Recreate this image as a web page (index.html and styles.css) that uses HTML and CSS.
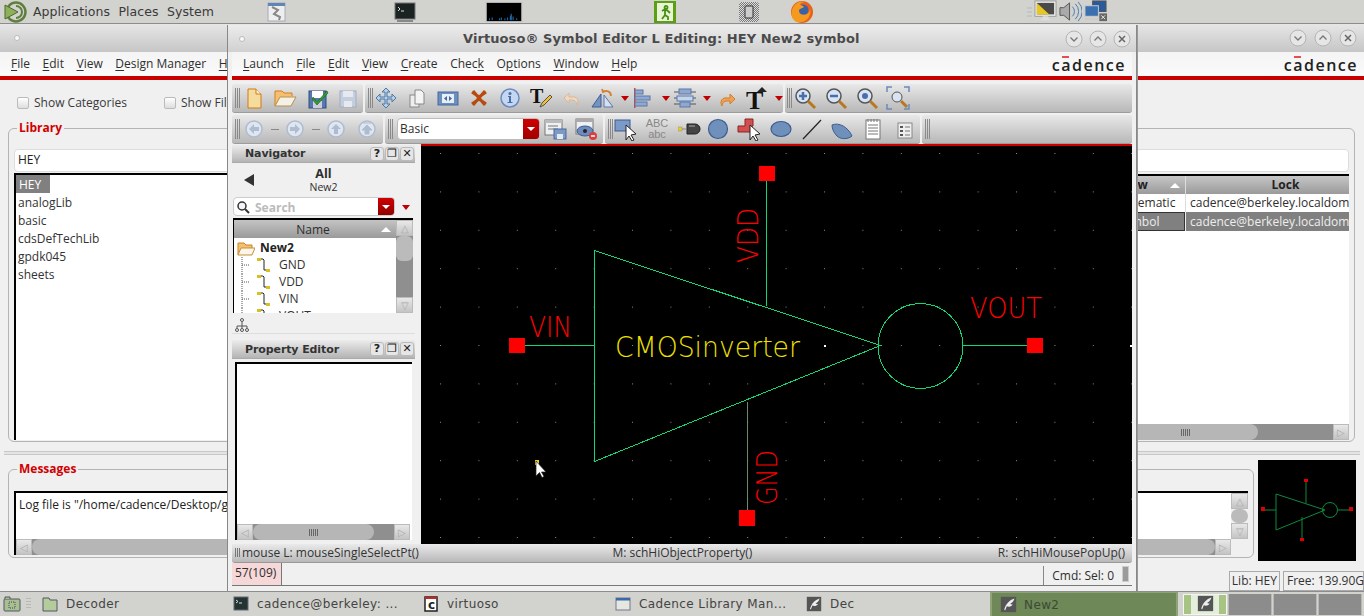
FILE: index.html
```html
<!DOCTYPE html>
<html lang="en">
<head>
<meta charset="utf-8">
<title>Virtuoso Symbol Editor</title>
<link rel="stylesheet" href="styles.css">
</head>
<body>
<svg class="sprite" width="0" height="0">
  <symbol id="pin" viewBox="0 0 16 16"><path d="M2 1h5l1 1v10h5" fill="none" stroke="#222" stroke-width="1"/><rect x="1" y="0" width="4" height="3" fill="#d8c020"/><rect x="10" y="11" width="4" height="3" fill="#d8c020"/></symbol>
  <symbol id="wbtn" viewBox="0 0 18 18"><circle cx="9" cy="9" r="8" fill="#e6e6e6" stroke="#b4b4b4"/></symbol>
  <symbol id="caret" viewBox="0 0 10 10"><path d="M1 3h8l-4 5z" fill="#c00000"/></symbol>
  <symbol id="grip3" viewBox="0 0 6 26"><path d="M.5 3v20M2.500 3v20M4.500 3v20" stroke="#8a8a8a" stroke-width="1"/></symbol>
  <symbol id="vnc" viewBox="0 0 20 20"><rect x="1" y="1" width="18" height="18" fill="#555"/><path d="M5 16C7 9 11 5 17 3c-1 4-3 5-5 6 1 1 2 1 3 1-2 3-5 3-7 2l-2 5z" fill="#eee"/></symbol>
</svg>

<div class="desktop">
  <header class="panel-top">
    <svg class="logo" viewBox="0 0 24 24"><circle cx="12" cy="12" r="9.500" fill="none" stroke="#5f7f3c" stroke-width="2.500"/><path d="M12 6a6 6 0 0 1 0 12" fill="none" stroke="#5f7f3c" stroke-width="2"/><path d="M1 5l13 7L1 19z" fill="#8fb05a" stroke="#4d6a2c"/></svg>
    <nav class="pmenu"><span>Applications</span><span>Places</span><span>System</span></nav>
    <svg class="tl tl1" viewBox="0 0 20 20"><rect x="1" y="1" width="17" height="18" fill="#eee" stroke="#aab"/><rect x="1" y="1" width="17" height="3" fill="#5d86b5"/><path d="M5 5l6 3-4 4 6 3-1 3" fill="none" stroke="#888" stroke-width="2"/></svg>
    <svg class="tl tl2" viewBox="0 0 22 20"><rect x="1" y="1" width="20" height="16" fill="#1a2222" stroke="#777"/><path d="M3 18h16v2H3z" fill="#888"/><path d="M4 5l2 2-2 2M7 9h3" stroke="#ddd" fill="none"/></svg>
    <svg class="tl tl3" viewBox="0 0 40 22"><rect x=".5" y=".5" width="39" height="21" fill="#000" stroke="#bbb" stroke-width="1"/><path d="M4 20v-2M7 20v-3M15 20v-2M17 20v-3M21 20v-2M24 20v-3M27 20v-5M28 20v-7M30 20v-4M34 20v-2" stroke="#2080d0"/></svg>
    <svg class="tl tl4" viewBox="0 0 22 22"><rect width="22" height="22" fill="#5aa010"/><rect x="3" y="2" width="16" height="18" fill="#e8f4d8"/><path d="M12 5a1.500 1.500 0 1 0 .1 0M8 10l3-2 3 2 2 2M11 9l0 5-3 4M11 14l3 2 0 3" stroke="#4a9010" stroke-width="1.800" fill="none"/></svg>
    <svg class="tl tl5" viewBox="0 0 20 20"><defs><pattern id="chk" width="2" height="2" patternUnits="userSpaceOnUse"><rect width="2" height="2" fill="#ddd"/><rect width="1" height="1" fill="#777"/><rect x="1" y="1" width="1" height="1" fill="#777"/></pattern></defs><rect width="20" height="20" rx="3" fill="url(#chk)"/><rect x="6" y="4" width="8" height="12" rx="1" fill="#ccc" stroke="#333"/></svg>
    <svg class="tl tl6" viewBox="0 0 24 24"><circle cx="12" cy="12" r="11" fill="#e8601a"/><circle cx="13" cy="10" r="5.500" fill="#3a62a8"/><path d="M2 10C4 3 10 0 16 2c-3 0-6 1-6 3 2 0 3 1 4 2-2 2-5 1-5 4 0 3 4 5 8 3 2-1 3-3 3-6 2 7-3 14-9 14C4 24 0 16 2 10z" fill="#f59a1e"/></svg>
    <svg class="grp" viewBox="0 0 6 12"><path d="M0 2h5M0 6h5M0 10h5" stroke="#b8b8b4"/></svg>
    <svg class="tray t1" viewBox="0 0 24 24"><rect x="1" y="1" width="22" height="16" fill="#eee" stroke="#999"/><rect x="3" y="3" width="18" height="12" fill="#4a4a48"/><path d="M3 3v12h13z" fill="#e8c820"/><path d="M9 17h6v2l3 2H6l3-2z" fill="#ddd"/></svg>
    <svg class="tray t2" viewBox="0 0 24 24"><path d="M1 8h4l6-5v18l-6-5H1z" fill="#aaa" stroke="#555"/><path d="M14 7a7 7 0 0 1 0 10M17 4a11 11 0 0 1 0 16M20 2a14 14 0 0 1 0 20" fill="none" stroke="#4a7ab0"/></svg>
    <svg class="tray t3" viewBox="0 0 24 24"><rect x="9" y="1" width="14" height="11" fill="#2a5a9a" stroke="#555"/><rect x="1" y="6" width="14" height="11" fill="#3a70b0" stroke="#ccc"/><path d="M1 19h14v2H1z" fill="#ccc"/><rect x="16" y="14" width="8" height="8" fill="#666"/><path d="M18 16l4 4m0-4l-4 4" stroke="#eee"/></svg>
  </header>

  <section class="win back">
    <div class="title"><i class="dot"></i><div class="wbtns back-b"><svg class="wb" viewBox="0 0 18 18"><use href="#wbtn"/><path d="M5.500 7.500l3.500 3.500 3.500-3.500" fill="none" stroke="#777" stroke-width="1.300"/></svg><svg class="wb" viewBox="0 0 18 18"><use href="#wbtn"/><path d="M5.500 10.500l3.500-3.500 3.500 3.500" fill="none" stroke="#777" stroke-width="1.300"/></svg><svg class="wb" viewBox="0 0 18 18"><use href="#wbtn"/><path d="M6 6l6 6m0-6l-6 6" fill="none" stroke="#666" stroke-width="1.500"/></svg></div></div>
    <div class="menubar back-m"><span><u>F</u>ile</span><span><u>E</u>dit</span><span><u>V</u>iew</span><span><u>D</u>esign Manager</span><span><u>H</u>elp</span><b class="cad">c<em>a</em>dence</b></div>
    <div class="opts"><label><i class="cb"></i>Show Categories</label><label><i class="cb"></i>Show Files</label></div>
    <fieldset class="grpbox lib">
      <legend>Library</legend>
      <div class="input">HEY</div>
      <div class="libbody">
        <ul class="liblist"><li class="sel">HEY</li><li>analogLib</li><li>basic</li><li>cdsDefTechLib</li><li>gpdk045</li><li>sheets</li></ul>
        <div class="cells">
          <div class="table">
            <div class="row head"><span class="c1">View<svg class="sort" viewBox="0 0 10 6"><path d="M0 6l5-5 5 5z" fill="#fff"/></svg></span><span class="c2">Lock</span></div>
            <div class="row"><span class="c1">schematic</span><span class="c2">cadence@berkeley.localdomain</span></div>
            <div class="row picked"><span class="c1 focus">symbol</span><span class="c2">cadence@berkeley.localdomain</span></div>
          </div>
          <div class="hscroll libscroll"><span class="thumb"><i></i></span><span class="arrow">▷</span></div>
        </div>
      </div>
    </fieldset>
    <div class="split"></div>
    <div class="msgrow">
      <fieldset class="grpbox msg">
        <legend>Messages</legend>
        <div class="logbox">
          <div class="logmain">
            <p>Log file is "/home/cadence/Desktop/gpdk045/CDS.log"</p>
            <div class="hscroll logscroll"><span class="arrow">◁</span><span class="thumb"></span><span class="arrow">▷</span></div>
          </div>
          <div class="vscroll logv"><span class="up">△</span><span class="vthumb"></span><span class="up">▽</span></div>
        </div>
      </fieldset>
      <svg class="preview" viewBox="0 0 98 101">
        <rect width="98" height="101" fill="#000"/>
        <g fill="none" stroke="#0c8a3c" stroke-width="1"><path d="M18 34V70L67 50zM72 50m-7.500 0a7.500 7.500 0 1 0 15 0a7.500 7.500 0 1 0-15 0M5 50H18M80 50H93M48 20V43M44 57V79"/></g>
        <g fill="#e00000"><rect x="3" y="47" width="4" height="4"/><rect x="91" y="47" width="4" height="4"/><rect x="46" y="19" width="4" height="3"/><rect x="42" y="78" width="4" height="3"/></g>
      </svg>
    </div>
    <div class="backstatus"><span>Lib: HEY</span><span>Free: 139.90G</span></div>
  </section>

  <section class="win front">
    <div class="title"><i class="dot"></i><h1>Virtuoso® Symbol Editor L Editing: HEY New2 symbol</h1><div class="wbtns"><svg class="wb" viewBox="0 0 18 18"><use href="#wbtn"/><path d="M5.500 7.500l3.500 3.500 3.500-3.500" fill="none" stroke="#777" stroke-width="1.300"/></svg><svg class="wb" viewBox="0 0 18 18"><use href="#wbtn"/><path d="M5.500 10.500l3.500-3.500 3.500 3.500" fill="none" stroke="#777" stroke-width="1.300"/></svg><svg class="wb" viewBox="0 0 18 18"><use href="#wbtn"/><path d="M6 6l6 6m0-6l-6 6" fill="none" stroke="#666" stroke-width="1.500"/></svg></div></div>
    <div class="menubar front-m"><span><u>L</u>aunch</span><span><u>F</u>ile</span><span><u>E</u>dit</span><span><u>V</u>iew</span><span><u>C</u>reate</span><span>Chec<u>k</u></span><span>O<u>p</u>tions</span><span><u>W</u>indow</span><span><u>H</u>elp</span><b class="cad">c<em>a</em>dence</b></div>
    <div class="tbrow r1">
      <div class="tb tb-a"><svg class="grip"><use href="#grip3"/></svg>
        <svg class="ic m1" viewBox="0 0 24 24"><path d="M6 3h8l5 5v14H6z" fill="#f6dc9c" stroke="#d07818"/><path d="M14 3v5h5" fill="#fff3cc" stroke="#d07818"/></svg>
        <svg class="ic" viewBox="0 0 24 24"><path d="M2 20V5h7l2 2h8v3" fill="#f4c070" stroke="#d08020"/><path d="M2 20l5-9h16l-5 9z" fill="#f4f0e4" stroke="#b89050"/></svg>
        <svg class="ic m9" viewBox="0 0 24 24"><rect x="3" y="5" width="17" height="17" fill="#5878b0" stroke="#304c80"/><rect x="6" y="5" width="11" height="7" fill="#fff"/><rect x="7" y="15" width="9" height="7" fill="#ccd"/><path d="M7 11l4 5 10-11 1 2-11 12-5-6z" fill="#30a030" stroke="#186018" stroke-width=".6"/></svg>
        <svg class="ic m6" viewBox="0 0 24 24"><rect x="4" y="5" width="16" height="16" fill="#c4cedd" stroke="#a0aec4"/><rect x="7" y="5" width="10" height="6" fill="#e6eaf0"/><rect x="8" y="15" width="8" height="6" fill="#e6eaf0"/></svg>
      </div>
      <div class="tb tb-b"><svg class="grip"><use href="#grip3"/></svg>
        <svg class="ic m0" viewBox="0 0 24 24"><path d="M12 2l4 4h-3v5h5V8l4 4-4 4v-3h-5v5h3l-4 4-4-4h3v-5H6v3l-4-4 4-4v3h5V6H8z" fill="#b8d0ea" stroke="#4a7aa8"/></svg>
        <svg class="ic" viewBox="0 0 24 24"><rect x="5" y="9" width="9" height="12" fill="#eee" stroke="#888"/><path d="M10 4h6l3 3v11h-9z" fill="#f4f4f4" stroke="#888"/></svg>
        <svg class="ic" viewBox="0 0 24 24"><rect x="2" y="6" width="20" height="13" fill="#6d8fc0" stroke="#466a9c"/><rect x="6" y="8" width="12" height="9" fill="#e8eef8"/><path d="M11 10l-3 2.500 3 2.500zM13 10l3 2.500-3 2.500z" fill="#44689c"/></svg>
        <svg class="ic" viewBox="0 0 24 24"><path d="M5 6l7 5 7-5M5 18l7-5 7 5M6 5l12 14M18 5L6 19" stroke="#b84a10" stroke-width="3" fill="none"/></svg>
        <svg class="ic" viewBox="0 0 24 24"><circle cx="12" cy="12" r="9" fill="#c4d6f0" stroke="#6a8ac0" stroke-width="1.500"/><path d="M10 10h3v6h1.500v1h-5v-1H11v-5h-1z" fill="#4a6ea8"/><circle cx="12" cy="7.500" r="1.500" fill="#4a6ea8"/></svg>
        <svg class="ic" viewBox="0 0 24 24"><text class="ser" x="1" y="17">T</text><path d="M11 21l2-4 8-8 2 2-8 8z" fill="#eec040" stroke="#333" stroke-width=".8"/></svg>
        <svg class="ic" viewBox="0 0 24 24"><path d="M17 19c3-5-1-9-5-8H9V7l-5 5 5 5v-3h3c3 0 5 2 5 5z" fill="#f0d8c0" stroke="#d8b898"/></svg>
        <svg class="ic" viewBox="0 0 24 24"><path d="M1 21L10 8v13z" fill="#7494c4" stroke="#3d5c90"/><path d="M13 9v12h9z" fill="#d4dff0" stroke="#5a78a8"/><path d="M20 10c0-5-5-6-8-4M11 3l1 3 3-1" fill="none" stroke="#d88030" stroke-width="1.800"/></svg>
        <svg class="car c5"><use href="#caret"/></svg>
        <svg class="ic m1" viewBox="0 0 24 24"><rect x="3" y="2" width="1.500" height="20" fill="#c44"/><rect x="4" y="4" width="8" height="4" fill="#8fa8d0" stroke="#5a78a8"/><rect x="4" y="10" width="15" height="4" fill="#8fa8d0" stroke="#5a78a8"/><rect x="4" y="16" width="12" height="4" fill="#8fa8d0" stroke="#5a78a8"/></svg>
        <svg class="car c6"><use href="#caret"/></svg>
        <svg class="ic m2" viewBox="0 0 24 24"><path d="M1 6h22M1 12h22M1 18h22" stroke="#555"/><rect x="6" y="3" width="12" height="5" fill="#8fa8d0" stroke="#5a78a8"/><rect x="4" y="10" width="16" height="5" fill="#c4d4ea" stroke="#5a78a8"/><rect x="7" y="16" width="10" height="5" fill="#8fa8d0" stroke="#5a78a8"/></svg>
        <svg class="car c5"><use href="#caret"/></svg>
        <svg class="ic m3" viewBox="0 0 24 24"><path d="M7 20c-3-5 1-9 5-8h3V8l5 5-5 5v-3h-3c-3 0-5 2-5 5z" fill="#f0a050" stroke="#d08030"/></svg>
        <svg class="ic m4" viewBox="0 0 24 24"><text class="ser big" x="3" y="23">T</text><path d="M14 6l5-5 5 5z" fill="#222"/></svg>
        <svg class="car c7"><use href="#caret"/></svg>
      </div>
      <div class="tb tb-c"><svg class="grip"><use href="#grip3"/></svg>
        <svg class="ic m0" viewBox="0 0 24 24"><circle cx="10" cy="10" r="7" fill="#d8e4f4" stroke="#555" stroke-width="1.500"/><path d="M6 10h8M10 6v8" stroke="#4a6ea8" stroke-width="2.500"/><path d="M15 15l7 7" stroke="#b87820" stroke-width="3"/></svg>
        <svg class="ic" viewBox="0 0 24 24"><circle cx="10" cy="10" r="7" fill="#d8e4f4" stroke="#555" stroke-width="1.500"/><path d="M6 10h8" stroke="#4a6ea8" stroke-width="2.500"/><path d="M15 15l7 7" stroke="#b87820" stroke-width="3"/></svg>
        <svg class="ic" viewBox="0 0 24 24"><circle cx="10" cy="10" r="7" fill="#d8e4f4" stroke="#555" stroke-width="1.500"/><circle cx="10" cy="10" r="3" fill="#4a6ea8"/><path d="M15 15l7 7" stroke="#b87820" stroke-width="3"/></svg>
        <svg class="ic" viewBox="0 0 24 24"><path d="M1 6V1h5M18 1h5v5M1 18v5h5M23 18v5h-5" fill="none" stroke="#6a8ac0" stroke-width="1.500"/><circle cx="11" cy="11" r="5" fill="#d8e4f4" stroke="#555"/><path d="M15 15l6 6" stroke="#b87820" stroke-width="3"/></svg>
      </div>
    </div>
    <div class="tbrow r2">
      <div class="tb tb-d"><svg class="grip"><use href="#grip3"/></svg>
        <svg class="ic m1" viewBox="0 0 24 24"><circle cx="12" cy="12" r="8" fill="#dfe6f0" stroke="#aebcd0" stroke-width="1.500"/><path d="M7 12l5-5v3h5v4h-5v3z" fill="#aebcd0"/></svg>
        <i class="dash"></i>
        <svg class="ic m4" viewBox="0 0 24 24"><circle cx="12" cy="12" r="8" fill="#dfe6f0" stroke="#aebcd0" stroke-width="1.500"/><path d="M17 12l-5-5v3H7v4h5v3z" fill="#aebcd0"/></svg>
        <i class="dash"></i>
        <svg class="ic m4" viewBox="0 0 24 24"><circle cx="12" cy="12" r="8" fill="#dfe6f0" stroke="#aebcd0" stroke-width="1.500"/><path d="M12 7l-5 5h3v5h4v-5h3z" fill="#aebcd0"/></svg>
        <svg class="ic" viewBox="0 0 24 24"><circle cx="12" cy="12" r="8" fill="#dfe6f0" stroke="#aebcd0" stroke-width="1.500"/><path d="M8 6h8M12 8l-5 5h3v4h4v-4h3z" stroke="#aebcd0" fill="#aebcd0"/></svg>
      </div>
      <div class="tb tb-e"><svg class="grip"><use href="#grip3"/></svg>
        <div class="combo">Basic<span class="drop"><svg viewBox="0 0 10 6"><path d="M1 1h8L5 5z" fill="#fff"/></svg></span></div>
        <svg class="ic m3" viewBox="0 0 24 24"><rect x="2" y="3" width="17" height="15" fill="#eef0f4" stroke="#777"/><path d="M2 3h17v3H2z" fill="#bbb"/><path d="M5 9h10M5 12h10" stroke="#777"/><rect x="11" y="12" width="12" height="10" fill="#7c9ac8" stroke="#4a6a9c"/><rect x="14" y="17" width="6" height="5" fill="#e6eaf0"/></svg>
        <svg class="ic m7" viewBox="0 0 24 24"><rect x="2" y="2" width="17" height="15" fill="#eef0f4" stroke="#777"/><path d="M2 2h17v3H2z" fill="#aaa"/><ellipse cx="11" cy="14" rx="8" ry="5" fill="#6d8cbc" stroke="#3c5c90"/><circle cx="11" cy="14" r="2" fill="#223"/><circle cx="19" cy="19" r="4" fill="#d84040"/><path d="M17 19h4" stroke="#fff" stroke-width="1.500"/></svg>
      </div>
      <div class="tb tb-f"><svg class="grip"><use href="#grip3"/></svg>
        <svg class="ic m0" viewBox="0 0 24 24"><rect x="1" y="3" width="15" height="11" fill="#7c9ac8" stroke="#3c5c90"/><path d="M12 8v15l3-4 3 5 2-1-3-5 5-1z" fill="#fff" stroke="#222"/></svg>
        <span class="abc m7">ABC<br>abc</span>
        <svg class="ic m9" viewBox="0 0 24 24"><path d="M1 12h7" stroke="#aaa" stroke-width="2"/><rect x="0" y="10" width="4" height="4" fill="#e8d020" stroke="#888" stroke-width=".5"/><path d="M9 7h8a5 5 0 0 1 0 10H9z" fill="#444" stroke="#222"/><path d="M11 9h6" stroke="#aaa"/></svg>
        <svg class="ic m4" viewBox="0 0 24 24"><circle cx="12" cy="12" r="9.500" fill="#7090bc" stroke="#3c5c90" stroke-width="1.200"/></svg>
        <svg class="ic m7" viewBox="0 0 24 24"><path d="M1 10h7V3h8v7h-1v6H1z" fill="#d05050" stroke="#902020" transform="translate(0 -1)"/><path d="M13 8v15l3-4 3 5 2-1-3-5 5-1z" fill="#fff" stroke="#222"/></svg>
        <svg class="ic m8" viewBox="0 0 24 24"><ellipse cx="12" cy="12" rx="10" ry="7.500" fill="#7090bc" stroke="#3c5c90" stroke-width="1.200"/></svg>
        <svg class="ic m7" viewBox="0 0 24 24"><path d="M3 22L21 3" stroke="#222" stroke-width="1.200"/></svg>
        <svg class="ic m6" viewBox="0 0 24 24"><path d="M2 8c7-3 16 2 20 11-5 4-12 3-15 0C4 16 2 12 2 8z" fill="#7090bc" stroke="#3c5c90"/></svg>
        <svg class="ic m7" viewBox="0 0 24 24"><rect x="5" y="3" width="14" height="19" fill="#fff" stroke="#777"/><path d="M7 2v3M10 2v3M13 2v3M16 2v3M7 8h10M7 11h10M7 14h10M7 17h10" stroke="#777"/></svg>
        <svg class="ic m8" viewBox="0 0 24 24"><rect x="5" y="6" width="14" height="15" fill="#eee" stroke="#888"/><path d="M7 9h3v2H7zM7 13h3v2H7zM7 17h3v2H7z" fill="#555"/><path d="M12 10h5M12 14h5M12 18h5" stroke="#777"/></svg>
      </div>
      <div class="tb tb-g"><svg class="grip"><use href="#grip3"/></svg></div>
    </div>
    <div class="mainrow">
      <aside class="docks">
        <div class="dockhead"><b>Navigator</b><span class="dbtn">?</span><span class="dbtn">❐</span><span class="dbtn">✕</span></div>
        <div class="navtop"><svg class="backtri" viewBox="0 0 10 12"><path d="M10 0v12L0 6z" fill="#333"/></svg><div class="navttl"><b>All</b><small>New2</small></div></div>
        <div class="searchrow"><div class="search"><svg viewBox="0 0 14 14"><circle cx="6" cy="6" r="4" fill="#f4f4f4" stroke="#333" stroke-width="1.500"/><path d="M9 9l4 4" stroke="#333" stroke-width="2"/></svg><span>Search</span><i class="sdrop"><svg viewBox="0 0 10 6"><path d="M1 1h8L5 5z" fill="#fff"/></svg></i></div><svg class="scar"><use href="#caret"/></svg></div>
        <div class="tree">
          <div class="treemain">
            <div class="treehead">Name<svg class="sort" viewBox="0 0 10 6"><path d="M0 6l5-5 5 5z" fill="#fff"/></svg></div>
            <div class="node root"><svg viewBox="0 0 18 16"><path d="M1 14V2h6l2 2h6v3" fill="#f4c070" stroke="#d08020"/><path d="M1 14l3-7h14l-3 7z" fill="#fdf6e6" stroke="#c09040"/></svg><b>New2</b></div>
            <div class="node"><svg class="lead" viewBox="0 0 10 17"><path d="M1 0v17M1 8h8" stroke="#555" stroke-dasharray="1 1"/></svg><svg class="p" ><use href="#pin"/></svg>GND</div>
            <div class="node"><svg class="lead" viewBox="0 0 10 17"><path d="M1 0v17M1 8h8" stroke="#555" stroke-dasharray="1 1"/></svg><svg class="p"><use href="#pin"/></svg>VDD</div>
            <div class="node"><svg class="lead" viewBox="0 0 10 17"><path d="M1 0v17M1 8h8" stroke="#555" stroke-dasharray="1 1"/></svg><svg class="p"><use href="#pin"/></svg>VIN</div>
            <div class="node"><svg class="lead" viewBox="0 0 10 17"><path d="M1 0v17M1 8h8" stroke="#555" stroke-dasharray="1 1"/></svg><svg class="p"><use href="#pin"/></svg>VOUT</div>
          </div>
          <div class="vscroll tree-v"><span class="up">△</span><span class="vthumb"></span><span class="track"></span><span class="up">▽</span></div>
        </div>
        <div class="navfoot"><svg viewBox="0 0 14 14"><circle cx="7" cy="2" r="1.500" fill="none" stroke="#555"/><path d="M7 4v4M2 10V8h10v2M7 8v2" fill="none" stroke="#555"/><circle cx="2" cy="12" r="1.500" fill="none" stroke="#555"/><circle cx="7" cy="12" r="1.500" fill="none" stroke="#555"/><circle cx="12" cy="12" r="1.500" fill="none" stroke="#555"/></svg></div>
        <div class="dockhead ph"><b>Property Editor</b><span class="dbtn">?</span><span class="dbtn">❐</span><span class="dbtn">✕</span></div>
        <div class="propbox"><div class="hscroll propscroll"><span class="arrow">◁</span><span class="thumb"><i></i></span><span class="arrow">▷</span></div></div>
      </aside>
      <svg class="canvas" viewBox="421 146 711 398">
        <defs><pattern id="grid" x="824" y="345" width="38.400" height="38.400" patternUnits="userSpaceOnUse"><rect width="1" height="1" fill="#8a8a8a"/></pattern></defs>
        <rect x="421" y="146" width="711" height="398" fill="#000"/>
        <rect x="421" y="146" width="711" height="398" fill="url(#grid)"/>
        <rect x="824" y="345" width="2" height="2" fill="#fff"/><rect x="1130" y="345" width="2" height="2" fill="#fff"/>
        <g class="wire">
          <path d="M594.500 250.500V461.500L880.500 345.500Z"/>
          <circle cx="920.500" cy="346" r="42.500"/>
          <path d="M766.500 173V306M962 345.500H1035M517 345.500H595"/>
        </g>
        <path class="wire dim" d="M747.500 402V518"/>
        <g fill="#ff0000"><rect x="759" y="166" width="16" height="15"/><rect x="739" y="510" width="16" height="16"/><rect x="509" y="338" width="16" height="15"/><rect x="1027" y="338" width="16" height="15"/></g>
        <text class="lbl red" x="529" y="337" textLength="43" lengthAdjust="spacingAndGlyphs">VIN</text>
        <text class="lbl red" x="970" y="318" textLength="72" lengthAdjust="spacingAndGlyphs">VOUT</text>
        <text class="lbl yel" x="615" y="357" textLength="185" lengthAdjust="spacingAndGlyphs">CMOSinverter</text>
        <text class="lbl red" transform="translate(758 263) rotate(-90)" textLength="55" lengthAdjust="spacingAndGlyphs">VDD</text>
        <text class="lbl red" transform="translate(777 505) rotate(-90)" textLength="55" lengthAdjust="spacingAndGlyphs">GND</text>
        <rect x="535" y="460" width="4" height="5" fill="#e8d020"/>
        <path d="M536 461v15l3.500-3.500 2.500 5 2-1-2.500-4.500H546z" fill="#fff" stroke="#222" stroke-width=".7"/>
      </svg>
    </div>
    <div class="mouseline"><span class="ml"><i class="mgrip"></i>mouse L: mouseSingleSelectPt()</span><span class="mm">M: schHiObjectProperty()</span><span class="mr">R: schHiMousePopUp()</span></div>
    <div class="statusline"><span class="count">57(109)</span><span class="cmd">Cmd: Sel: 0</span><i class="stub"></i></div>
  </section>

  <footer class="panel-bot">
    <div class="b-showdesk"><svg viewBox="0 0 18 16"><rect x="1" y="3" width="16" height="12" rx="1" fill="#a8c090" stroke="#556"/><path d="M2 3V1h5v2" fill="#a8c090" stroke="#556"/><rect x="6" y="6" width="6" height="6" fill="none" stroke="#445" stroke-dasharray="1 1"/></svg></div>
    <i class="b-sep"></i>
    <div class="task t-dec"><svg viewBox="0 0 16 16"><path d="M1 15V2h6l1 2h7v11z" fill="#b4cc9c" stroke="#556"/></svg>Decoder</div>
    <div class="task t-cad"><svg viewBox="0 0 16 16"><rect x="1" y="1" width="14" height="13" fill="#233" stroke="#667"/><path d="M3 4l2 1.500-2 1.500M6 7h3" stroke="#ddd" fill="none"/></svg>cadence@berkeley: ...</div>
    <div class="task t-vir"><svg viewBox="0 0 16 16"><rect x="2" y="1" width="12" height="14" fill="#fff" stroke="#222" stroke-width="1.500"/><rect x="2" y="1" width="12" height="2" fill="#d02020"/><text class="ctext" x="5" y="13">c</text></svg>virtuoso</div>
    <div class="task t-lib"><svg viewBox="0 0 16 16"><rect x="1" y="2" width="14" height="12" fill="#e4e8e0" stroke="#778"/><rect x="1" y="2" width="14" height="2.500" fill="#3a68a8"/></svg>Cadence Library Man...</div>
    <div class="task t-de2"><svg><use href="#vnc"/></svg>Dec</div>
    <div class="task active"><svg><use href="#vnc"/></svg>New2</div>
    <div class="pager"><span class="pg on"><i class="lg"></i><i class="pl"></i><svg><use href="#vnc"/></svg><i class="pl"></i><i class="lg"></i></span><span class="pg"></span><span class="pg"></span><span class="pg"></span></div>
  </footer>
</div>
</body>
</html>
```
FILE: styles.css
```css
* { box-sizing: border-box; }
html, body { margin: 0; padding: 0; background: #d2d2ce; overflow: hidden; }
.sprite { position: absolute; }
.desktop { position: relative; width: 1364px; height: 616px; overflow: hidden; font: 12px/1.2 "Open Sans", "Noto Sans", sans-serif; color: #2e2e2e; }

/* panels */
.panel-top { height: 24px; background: #d2d2ce; border-bottom: 1px solid #8c8c8c; display: flex; align-items: center; font: 12.5px "DejaVu Sans", sans-serif; color: #3a3a3a; }
.logo { width: 24px; height: 24px; margin-left: 4px; }
.pmenu { display: flex; gap: 8.500px; margin-left: 5px; letter-spacing: .05px; }
.tl { height: 20px; width: 20px; flex: none; }
.tl1 { margin-left: 53px; }
.tl2 { width: 22px; margin-left: 107px; }
.tl3 { width: 40px; margin-left: 68px; }
.tl4 { width: 22px; height: 22px; margin-left: 130px; }
.tl5 { margin-left: 63px; }
.tl6 { width: 24px; height: 24px; margin-left: 31px; }
.grp { width: 6px; height: 12px; margin-left: 213px; }
.tray { width: 23px; height: 23px; }
.t1 { margin-left: 1px; }
.t2 { margin-left: 2px; }
.t3 { margin-left: 2px; }

.panel-bot { position: absolute; left: 0; right: 0; top: 591px; height: 25px; background: #d2d2ce; border-top: 1px solid #8c8c8c; display: flex; align-items: center; font: 12px "DejaVu Sans", sans-serif; color: #444; letter-spacing: .4px; }
.b-showdesk { width: 24px; height: 24px; padding: 4px 3px; flex: none; }
.b-showdesk svg { width: 18px; height: 16px; display: block; }
.b-sep { width: 8px; height: 22px; background: repeating-linear-gradient(#b8b8b4 0 1px, transparent 1px 3px) center/5px 12px no-repeat; flex: none; }
.task { display: flex; align-items: center; gap: 8px; height: 24px; flex: none; white-space: nowrap; padding-left: 0; }
.task svg { width: 16px; height: 16px; flex: none; }
.t-dec { width: 201px; padding-left: 10px; }
.t-cad { width: 190px; }
.t-vir { width: 192px; }
.t-lib { width: 191px; }
.t-de2 { width: 184px; }
.active { width: 188px; background: #6e8858; border: 1px solid #8ea478; border-width: 1px 2px 0; color: #3c4a34; padding-left: 8px; margin-right: 5px; gap: 7px; }
.active svg { width: 17px; height: 17px; }
.ctext { font: bold 12px "DejaVu Sans", sans-serif; fill: #222; }
.pager { display: flex; width: 179px; height: 21px; gap: 1px; flex: none; }
.pg { flex: 1; background: #8c8c8c; display: flex; border: 1px solid #b8b8b4; border-width: 0 1px; }
.pg.on { background: #e4eedc; border: 1px solid #f4f4f0; align-items: stretch; flex: 1; justify-content: center; }
.pg .lg { width: 7px; background: #a8c484; }
.pg .pl { flex: 1; }
.pg svg { width: 17px; height: 17px; }

/* windows */
.win { position: absolute; background: #f0f0f0; display: flex; flex-direction: column; }
.back { left: 0; top: 24px; width: 1364px; height: 568px; }
.front { left: 227px; top: 25px; width: 910px; height: 567px; border: 1px solid #888; border-width: 0 1px 0 1px; box-shadow: 1px 0 0 #999; padding: 0 4px 0 4px; }
.title { height: 28px; background: linear-gradient(#e6e6e6, #c6c6c6); display: flex; align-items: center; flex: none; position: relative; padding: 0 7px 0 10px; }
.front .title { height: 27px; background: linear-gradient(#ececec, #d0d0d0); margin: 0 -4px; padding: 0 5px 0 10px; }
.dot { width: 6px; height: 6px; border-radius: 50%; background: #fafafa; border: 1px solid #bbb; margin-left: 4px; flex: none; }
.front .dot { margin-left: 1px; }
h1 { font: bold 13px "DejaVu Sans", sans-serif; color: #4a4a4a; margin: 0 0 0 218px; letter-spacing: .08px; white-space: nowrap; }
.wbtns { margin-left: auto; display: flex; gap: 6px; }
.back-b { gap: 7px; }
.wb { width: 18px; height: 18px; display: block; }
.menubar { display: flex; align-items: center; background: linear-gradient(#f4f4f4, #fafafa); border-bottom: 4px solid #c80000; flex: none; height: 28px; padding-top: 1px; }
.back-m { padding-left: 11px; gap: 12.600px; padding-right: 7px; }
.front-m { padding-left: 11px; gap: 12.600px; padding-right: 7px; }
.cad { margin-left: auto; font: 600 16px/20px "Open Sans", sans-serif; letter-spacing: 1.500px; color: #222; margin-right: -1px; }
.cad em { font-style: normal; position: relative; display: inline-block; }
.cad em::before { content: ""; position: absolute; left: 1px; right: 3px; top: 1px; height: 2px; background: #e05050; }
u { text-decoration-thickness: 1px; text-underline-offset: 2px; }

/* back window */
.opts { height: 41px; display: flex; align-items: flex-start; padding: 16px 0 0 17px; gap: 37px; flex: none; }
.opts label { display: flex; align-items: center; gap: 5px; white-space: nowrap; color: #3a3a3a; }
.cb { width: 12px; height: 12px; background: linear-gradient(#fff, #ddd); border: 1px solid #bbb; border-radius: 2px; display: block; }
.grpbox { border: 1px solid #b4b4b4; border-radius: 6px; margin: 0 9px 0 8px; padding: 0 5px; min-width: 0; }
.grpbox legend { color: #d00000; font-weight: 700; font-size: 12px; padding: 0 2px; margin-left: 3px; line-height: 14px; }
.lib { height: 321px; flex: none; padding-top: 14px; display: flex; flex-direction: column; }
.input { height: 23px; background: #fff; border: 1px solid #ddd; border-radius: 4px; padding: 3px 3px; color: #222; flex: none; }
.libbody { display: flex; margin-top: 2px; height: 266px; gap: 6px; flex: none; }
.liblist { list-style: none; margin: -1px 0 0; padding: 0; width: 300px; background: #fff; border: 2px solid #000; border-width: 2px 0 0 2px; flex: none; }
.liblist li { height: 18px; line-height: 20px; padding-left: 2px; color: #333; }
.liblist .sel { background: #808080; color: #fff; width: 34px; padding-left: 3px; }
.cells { flex: 1; min-width: 0; background: #fff; border-top: 2px solid #000; display: flex; flex-direction: column; align-items: stretch; }
.table { flex: 1; padding-left: calc(100% - 234px); overflow: hidden; }
.row { display: flex; height: 18px; line-height: 18px; }
.row.head { height: 18px; font-weight: 700; background: linear-gradient(#c6c6c6, #9a9a9a); margin-left: -200px; padding-left: 200px; color: #222; }
.row .c1 { width: 70px; padding-left: 4px; white-space: nowrap; position: relative; overflow: hidden; flex: none; }
.row .c2 { width: 196px; padding-left: 4px; white-space: nowrap; overflow: hidden; border-left: 1px solid #ddd; flex: none; }
.head .c2 { text-align: center; }
.sort { position: absolute; right: 5px; top: 6px; width: 10px; height: 6px; }
.picked { background: #808080; color: #eee; height: 19px; line-height: 19px; width: 266px; }
.picked .focus { outline: 1px solid #333; outline-offset: -1px; }
.picked .c2 { border-left-color: #eee; }
.hscroll { height: 16px; background: #8f8f8f; display: flex; flex: none; }
.hscroll .arrow { width: 16px; background: linear-gradient(#e8e8e8, #c4c4c4); color: #aaa; text-align: center; line-height: 15px; font-size: 10px; flex: none; border: 1px solid #bbb; }
.hscroll .thumb { background: #b6b6b6; border-radius: 0 8px 8px 0; flex: 1; display: flex; justify-content: center; align-items: center; min-width: 0; }
.thumb i { width: 9px; height: 7px; background: repeating-linear-gradient(90deg, #666 0 1px, transparent 1px 2px); display: block; }
.libscroll .thumb { flex: none; width: 938px; justify-content: flex-end; padding-right: 68px; }
.libscroll .arrow { margin-left: auto; }
.split { height: 4px; margin: 9px 4px 0 4px; background: #e4e4e4; border: 1px solid #c8c8c8; border-width: 1px 0; flex: none; }
.msgrow { display: flex; margin-top: 5px; height: 101px; flex: none; align-items: flex-start; }
.msg { flex: 1; margin: 2px 4px 0 8px; height: 96px; padding: 0 5px; }
.logbox { display: flex; height: 64px; background: #f0f0f0; border: 2px solid #000; border-width: 2px 0 0 2px; margin-top: 15px; }
.logmain { flex: 1; display: flex; flex-direction: column; background: #fff; min-width: 0; }
.logmain p { flex: 1; margin: 0; padding: 5px 3px 0; white-space: nowrap; color: #222; overflow: hidden; }
.logscroll { width: 100%; }
.logscroll .thumb { border-radius: 8px; }
.vscroll { width: 17px; display: flex; flex-direction: column; background: #f0f0f0; flex: none; }
.logv { padding-bottom: 16px; }
.vscroll .up { height: 16px; background: linear-gradient(#e8e8e8, #c4c4c4); color: #aaa; text-align: center; font-size: 10px; line-height: 15px; border: 1px solid #bbb; flex: none; }
.vthumb { height: 14px; background: #bbb; border-radius: 7px; flex: none; }
.preview { width: 98px; height: 101px; flex: none; margin-right: 8px; display: block; }
.backstatus { display: flex; justify-content: flex-end; margin-top: 10px; gap: 3px; }
.backstatus span { height: 20px; border: 1px solid #aaa; padding: 2px; white-space: nowrap; color: #333; }
.backstatus span:last-child { width: 81px; padding-left: 3px; }

/* toolbars */
.tbrow { display: flex; gap: 2px; flex: none; }
.r1 { margin-top: 4px; height: 29px; }
.r2 { margin-top: 2px; height: 29px; }
.tb { display: flex; align-items: center; background: linear-gradient(#e8e8e8, #b8b8b8); border-radius: 3px; border-bottom: 1px solid #9c9c9c; padding-left: 3px; flex: none; overflow: hidden; }
.tb-a { width: 131px; }
.tb-b { width: 418px; }
.tb-c { flex: 1; padding-left: 2px; }
.tb-d { width: 151px; }
.tb-e { width: 218px; }
.tb-f { width: 315px; }
.tb-g { flex: 1; padding-left: 3px; }
.grip { width: 6px; height: 26px; flex: none; }
.ic { width: 24px; height: 24px; flex: none; margin-left: 7px; }
.m0 { margin-left: 0; } .m1 { margin-left: 1px; } .m2 { margin-left: 2px; } .m3 { margin-left: 3px; } .m4 { margin-left: 4px; } .m5 { margin-left: 5px; } .m6 { margin-left: 6px; } .m7 { margin-left: 7px; } .m8 { margin-left: 8px; } .m9 { margin-left: 9px; }
.car { width: 10px; height: 10px; flex: none; }
.c5 { margin-left: 5px; } .c6 { margin-left: 6px; } .c7 { margin-left: 7px; }
.ser { font: bold 20px "Liberation Serif", serif; fill: #111; }
.big { font-size: 26px; }
.dash { width: 8px; height: 1px; background: #888; flex: none; margin-left: 5px; }
.combo { width: 143px; height: 22px; margin-left: 3px; background: #fff; border: 1px solid #bbb; border-radius: 4px; line-height: 20px; padding-left: 2px; display: flex; justify-content: space-between; flex: none; overflow: hidden; }
.drop { width: 16px; background: linear-gradient(#d00000, #a00000); display: flex; align-items: center; justify-content: center; }
.drop svg { width: 10px; height: 6px; }
.abc { font: 11px/11px "Liberation Sans", sans-serif; width: 24px; color: #888; text-align: center; flex: none; }

/* main */
.mainrow { display: flex; height: 400px; flex: none; gap: 6px; }
.docks { width: 183px; flex: none; display: flex; flex-direction: column; padding-top: 1px; }
.canvas { flex: 1; display: block; border-top: 2px solid #c80000; height: 400px; width: 711px; }
.wire { fill: none; stroke: #10d878; stroke-width: 1; shape-rendering: crispEdges; }
.dim { stroke: #6a8a70; }
.lbl { font: 200 29px "DejaVu Sans", sans-serif; }
.red { fill: #ff0000; }
.yel { fill: #f0e000; }
.dockhead { height: 18px; background: linear-gradient(#ececec, #b4b4b4); display: flex; align-items: center; padding-left: 13px; flex: none; gap: 1px; border-bottom: 1px solid #aaa; }
.dockhead b { flex: 1; font: bold 11px "DejaVu Sans", sans-serif; letter-spacing: -.1px; color: #333; }
.dbtn { width: 14px; height: 14px; border: 1px solid #bbb; border-radius: 3px; background: #e6e6e6; font: bold 11px/12px "DejaVu Sans", sans-serif; text-align: center; color: #222; }
.dockhead .dbtn:last-child { margin-right: 1px; }
.ph { margin-top: 6px; height: 19px; }
.navtop { display: flex; height: 34px; align-items: center; flex: none; }
.backtri { width: 10px; height: 12px; margin-left: 12px; flex: none; }
.navttl { flex: 1; text-align: center; display: flex; flex-direction: column; margin-right: 22px; }
.navttl b { font-size: 12.5px; line-height: 14px; }
.navttl small { font-size: 10.5px; line-height: 13px; }
.searchrow { display: flex; align-items: center; flex: none; height: 19px; }
.search { width: 162px; height: 19px; margin-left: 1px; background: #fff; border: 1px solid #ccc; border-radius: 4px; display: flex; align-items: center; overflow: hidden; }
.search svg { width: 14px; height: 14px; flex: none; margin-left: 2px; }
.search span { color: #bbb; font-weight: 700; margin-left: 5px; flex: 1; padding-top: 3px; }
.sdrop { width: 16px; height: 17px; background: linear-gradient(#d00000, #900000); display: flex; align-items: center; justify-content: center; }
.sdrop svg { width: 10px; height: 6px; margin: 0; }
.scar { width: 10px; height: 10px; margin-left: 6px; }
.tree { display: flex; margin: 2px 2px 0 1px; height: 95px; flex: none; border-top: 2px solid #000; border-left: 1px solid #000; overflow: hidden; background: #fff; }
.treemain { flex: 1; overflow: hidden; min-width: 0; }
.treehead { height: 18px; margin-bottom: 2px; background: linear-gradient(#c4c4c4, #9a9a9a); text-align: center; line-height: 20px; position: relative; padding-right: 4px; }
.node { height: 17px; display: flex; align-items: center; color: #333; padding-left: 7px; white-space: nowrap; }
.node .lead { width: 10px; height: 17px; margin-right: 5px; flex: none; }
.node .p { width: 16px; height: 16px; margin-right: 7px; flex: none; }
.root { padding-left: 3px; }
.root svg { width: 18px; height: 16px; margin-right: 5px; }
.root b { color: #222; }
.tree-v { background: #8f8f8f; }
.tree-v .vthumb { height: 25px; border-radius: 6px; }
.tree-v .track { flex: 1; }
.navfoot { flex: none; padding: 5px 0 0 3px; border-bottom: 1px solid #ddd; height: 21px; }
.navfoot svg { width: 14px; height: 14px; display: block; }
.propbox { margin: 3px 3px 0 3px; height: 178px; border-top: 2px solid #000; border-left: 2px solid #000; background: #fff; display: flex; flex-direction: column; justify-content: flex-end; flex: none; }
.propscroll { background: #8f8f8f; margin-right: 2px; }
.propscroll .thumb { border-radius: 8px; flex: none; width: 121px; }
.propscroll .arrow:last-child { margin-left: auto; }

.mouseline { height: 19px; display: flex; background: linear-gradient(#eaeaea, #b8b8b8); border-radius: 0 0 3px 3px; justify-content: space-between; align-items: center; padding: 0 7px 0 3px; flex: none; color: #333; border-bottom: 1px solid #999; }
.ml { display: flex; align-items: center; gap: 2px; }
.mgrip { width: 5px; height: 9px; display: block; background: repeating-linear-gradient(90deg, #777 0 1px, transparent 1px 2px); }
.mm { position: relative; left: -26px; }
.statusline { height: 23px; display: flex; align-items: stretch; flex: none; border-bottom: 1px solid #777; }
.count { width: 50px; background: #f6d8d8; border-right: 1px solid #777; padding: 3px 3px; }
.cmd { margin-left: auto; border-left: 1px solid #888; padding: 3px 8px; margin-top: 3px; white-space: nowrap; }
.stub { width: 7px; background: #9a9a9a; margin: 3px 3px 3px 0; border: 1px solid #ccc; }
```
